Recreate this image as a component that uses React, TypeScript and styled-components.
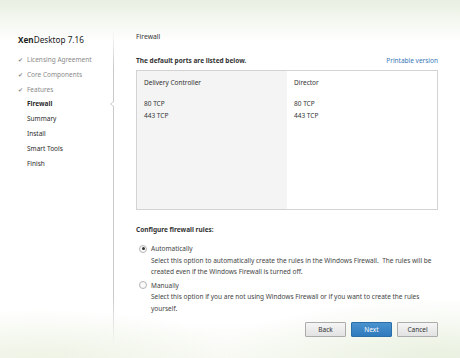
import React from "react";
import styled, { createGlobalStyle } from "styled-components";

const Global = createGlobalStyle`
  html, body { margin: 0; padding: 0; }
  body {
    width: 460px; height: 358px; overflow: hidden;
    font-family: "Noto Sans", "Open Sans", sans-serif;
    color: #333;
  }
`;

const Page = styled.div`
  width: 460px; height: 358px;
  display: flex;
  background:
    radial-gradient(ellipse 220px 60px at 440px 358px, rgba(232,240,222,0.9), rgba(255,255,255,0) 100%),
    radial-gradient(ellipse 200px 50px at 40px 358px, rgba(236,242,226,0.8), rgba(255,255,255,0) 100%),
    linear-gradient(to bottom, #e9efe2 0px, #f5f8f1 22px, #ffffff 42px, #ffffff 320px, #f8faf4 358px);
`;

const Sidebar = styled.div`
  width: 114px;
  flex: none;
  position: relative;
  padding: 33px 0 18px 18px;
  box-sizing: border-box;
  &::after {
    content: "";
    position: absolute;
    right: 0; top: 30px; bottom: 14px; width: 1px;
    background: linear-gradient(to bottom, rgba(200,200,200,0), #c9c9c9 12%, #c9c9c9 85%, rgba(200,200,200,0));
  }
`;

const Title = styled.div`
  font-size: 8.2px;
  color: #222;
  height: 14px;
  line-height: 14px;
  margin-bottom: 6px;
  b { font-weight: 700; }
`;

const Steps = styled.div`
  display: flex; flex-direction: column;
`;

const Step = styled.div<{ $state: "done" | "current" | "todo" }>`
  height: 14.8px; line-height: 14.8px;
  font-size: 6.5px;
  display: flex; align-items: center;
  padding-left: ${(p) => (p.$state === "done" ? 0 : 9)}px;
  color: ${(p) => (p.$state === "done" ? "#8a8a8a" : "#2a2a2a")};
  font-weight: ${(p) => (p.$state === "current" ? 700 : 400)};
  position: relative;
`;

const Check = styled.span`
  width: 9px; font-size: 6px; color: #8a8a8a;
`;

const Notch = styled.span`
  position: absolute;
  right: -1px; top: 4px;
  width: 0; height: 0;
  border-top: 3.5px solid transparent;
  border-bottom: 3.5px solid transparent;
  border-right: 4px solid #ffffff;
  z-index: 2;
  filter: drop-shadow(-0.5px 0 0 #c0c0c0);
`;

const Main = styled.div`
  flex: 1;
  padding: 31px 22px 0 22px;
  display: flex; flex-direction: column;
`;

const Heading = styled.div`
  font-size: 6.8px; color: #333; height: 12px; line-height: 12px;
  margin-bottom: 11px;
`;

const IntroRow = styled.div`
  display: flex; justify-content: space-between; align-items: center;
  height: 12px; font-size: 6.5px;
  margin-bottom: 4px;
`;

const Bold = styled.span`
  font-weight: 700; color: #333;
`;

const Link = styled.span`
  color: #3a77b8;
`;

const Table = styled.div`
  height: 140px;
  border: 1px solid #d3d3d3;
  box-sizing: border-box;
  display: grid;
  grid-template-columns: 150px 1fr;
`;

const Col = styled.div<{ $shade?: boolean }>`
  background: ${(p) => (p.$shade ? "#f4f4f4" : "#ffffff")};
  padding: 6px 7px;
  font-size: 6.5px;
  color: #333;
  line-height: 12px;
`;

const ColHead = styled.div`
  margin-bottom: 9px;
`;

const Configure = styled.div`
  font-size: 6.5px; font-weight: 700; color: #333;
  margin-top: 14px;
  height: 12px; line-height: 12px;
  margin-bottom: 7px;
`;

const Option = styled.div`
  display: grid;
  grid-template-columns: 8px 1fr;
  column-gap: 4px;
  font-size: 6.5px; color: #444;
  line-height: 11.5px;
  margin-bottom: 2px;
  margin-left: 3px;
`;

const Radio = styled.span<{ $on?: boolean }>`
  width: 6px; height: 6px; border-radius: 50%;
  border: 1px solid #b5b5b5;
  background: #fafafa;
  align-self: center;
  box-sizing: content-box;
  display: flex; align-items: center; justify-content: center;
  &::after {
    content: "";
    width: 3px; height: 3px; border-radius: 50%;
    background: ${(p) => (p.$on ? "#333" : "transparent")};
  }
`;

const Desc = styled.div`
  grid-column: 2;
  color: #444;
`;

const Buttons = styled.div`
  display: flex; justify-content: flex-end; gap: 5px;
  margin-top: 6px;
`;

const Button = styled.button<{ $primary?: boolean }>`
  font-family: "Noto Sans", "Open Sans", sans-serif;
  font-size: 6.5px;
  height: 15px;
  width: 41px;
  padding: 0;
  border: 1px solid ${(p) => (p.$primary ? "#2a6fa8" : "#acacac")};
  background: ${(p) => (p.$primary ? "linear-gradient(#4a93cf, #2f7abd)" : "linear-gradient(#f5f5f5, #e2e2e2)")};
  color: ${(p) => (p.$primary ? "#ffffff" : "#333")};
  border-radius: 1px;
`;

const steps: { label: string; state: "done" | "current" | "todo" }[] = [
  { label: "Licensing Agreement", state: "done" },
  { label: "Core Components", state: "done" },
  { label: "Features", state: "done" },
  { label: "Firewall", state: "current" },
  { label: "Summary", state: "todo" },
  { label: "Install", state: "todo" },
  { label: "Smart Tools", state: "todo" },
  { label: "Finish", state: "todo" },
];

export default function App() {
  return (
    <>
      <Global />
      <Page>
        <Sidebar>
          <Title>
            <b>Xen</b>Desktop 7.16
          </Title>
          <Steps>
            {steps.map((s) => (
              <Step key={s.label} $state={s.state}>
                {s.state === "done" && <Check>✔</Check>}
                {s.label}
                {s.state === "current" && <Notch />}
              </Step>
            ))}
          </Steps>
        </Sidebar>
        <Main>
          <Heading>Firewall</Heading>
          <IntroRow>
            <Bold>The default ports are listed below.</Bold>
            <Link>Printable version</Link>
          </IntroRow>
          <Table>
            <Col $shade>
              <ColHead>Delivery Controller</ColHead>
              <div>80 TCP</div>
              <div>443 TCP</div>
            </Col>
            <Col>
              <ColHead>Director</ColHead>
              <div>80 TCP</div>
              <div>443 TCP</div>
            </Col>
          </Table>
          <Configure>Configure firewall rules:</Configure>
          <Option>
            <Radio $on />
            <span>Automatically</span>
            <Desc>
              Select this option to automatically create the rules in the Windows Firewall.&nbsp; The rules will be created even if the Windows Firewall is turned off.
            </Desc>
          </Option>
          <Option>
            <Radio />
            <span>Manually</span>
            <Desc>
              Select this option if you are not using Windows Firewall or if you want to create the rules yourself.
            </Desc>
          </Option>
          <Buttons>
            <Button>Back</Button>
            <Button $primary>Next</Button>
            <Button>Cancel</Button>
          </Buttons>
        </Main>
      </Page>
    </>
  );
}
